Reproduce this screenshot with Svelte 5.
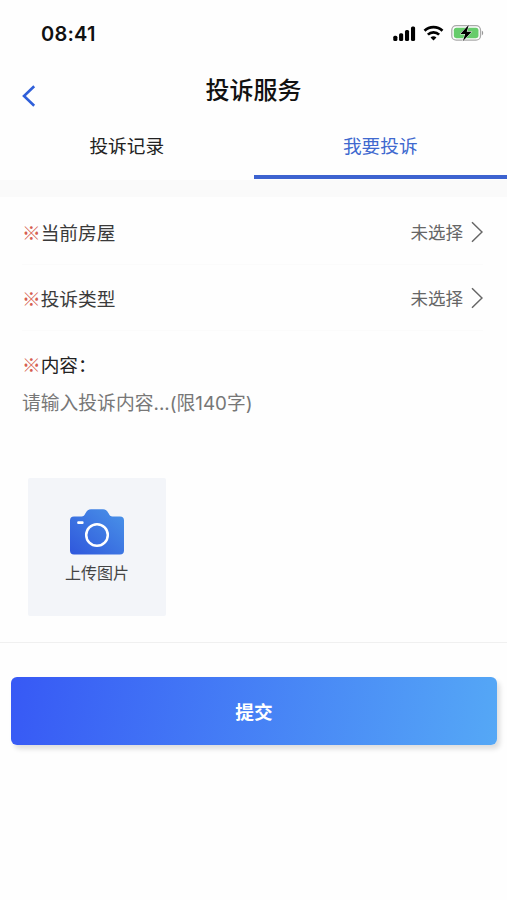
<script>
  const tabs = ['投诉记录', '我要投诉'];
  let activeTab = 1;
  let content = '';

  const fields = [
    { label: '当前房屋', value: '未选择' },
    { label: '投诉类型', value: '未选择' }
  ];
</script>

<div class="page">
  <div class="status-bar">
    <span class="time">08:41</span>
    <div class="status-icons">
      <svg width="23" height="15" viewBox="0 0 24 16">
        <rect x="0" y="10.5" width="4.4" height="5.5" rx="1.6" />
        <rect x="6.2" y="7.8" width="4.4" height="8.2" rx="1.6" />
        <rect x="12.5" y="4.2" width="4.4" height="11.8" rx="1.6" />
        <rect x="18.9" y="0.4" width="4.4" height="15.6" rx="1.6" />
      </svg>
      <svg class="wifi" width="21" height="16" viewBox="0 0 22 16">
        <path d="M1.6 5.7a13.4 13.4 0 0 1 18.8 0" />
        <path d="M5.1 9.7a8.4 8.4 0 0 1 11.8 0" />
        <path class="dot" d="M7.9 12.6Q11 10.2 14.1 12.6L11 15.8z" />
      </svg>
      <svg class="battery" width="33" height="18" viewBox="0 0 34 18">
        <rect x="0.8" y="1.4" width="29.6" height="15" rx="4.6" fill="none" stroke="#aaa" stroke-width="1.3" />
        <rect x="2.9" y="3.5" width="25.4" height="10.8" rx="2.6" fill="#66cc6b" />
        <path d="M31.8 6.6c1.8.6 1.8 4 0 4.6z" fill="#999" />
        <path d="M18.4.6 9.6 10h5l-2.4 7.5 9-9.8h-5z" stroke="#fff" stroke-width="1" paint-order="stroke" />
      </svg>
    </div>
  </div>

  <header>
    <button class="back" aria-label="返回">
      <svg width="14" height="22" viewBox="0 0 14 22">
        <path d="M12.2 1.3 2 11l10.2 9.7" />
      </svg>
    </button>
    <h1>投诉服务</h1>
  </header>

  <nav>
    {#each tabs as tab, i}
      <button class="tab" class:active={activeTab === i} on:click={() => (activeTab = i)}>
        {tab}
      </button>
    {/each}
  </nav>

  <div class="divider"></div>

  <div class="fields">
    {#each fields as field}
      <div class="field">
        <span class="label"><i>※</i>{field.label}</span>
        <span class="value">{field.value}</span>
        <svg width="12" height="22" viewBox="0 0 12 22">
          <path d="M1 1.3 11 11 1 20.7" />
        </svg>
      </div>
    {/each}
  </div>

  <div class="content">
    <label for="content"><i>※</i>内容：</label>
    <textarea id="content" bind:value={content} maxlength="140" placeholder="请输入投诉内容...(限140字)"></textarea>
    <button class="upload">
      <svg width="54" height="46" viewBox="0 0 54 46">
        <defs>
          <linearGradient id="camera" x1="0" y1="1" x2="1" y2="0">
            <stop offset="0" stop-color="#2f57dc" />
            <stop offset="1" stop-color="#4a94e8" />
          </linearGradient>
        </defs>
        <path
          d="M4 7.5h7.5c2 0 3-1 3.8-3L16 3.6c.8-2 2.5-3.4 5-3.4h12c2.5 0 4.2 1.4 5 3.4l.7.9c.8 2 1.8 3 3.8 3H50a4 4 0 0 1 4 4V41.5a4 4 0 0 1-4 4H4a4 4 0 0 1-4-4v-30a4 4 0 0 1 4-4z"
          fill="url(#camera)"
        />
        <circle cx="27" cy="26" r="10.8" fill="none" stroke="#fff" stroke-width="2.5" />
        <rect x="7.2" y="12.2" width="6.4" height="2.8" rx="1.1" fill="#fff" />
      </svg>
      <span>上传图片</span>
    </button>
  </div>

  <div class="footer">
    <button class="submit">提交</button>
  </div>
</div>

<style>
  :global(body) {
    background: #fefefe;
  }

  .page {
    height: 900px;
    overflow: hidden;
    color: #3a3a3a;
    font-family: Inter, 'Noto Sans CJK SC', sans-serif;
  }

  button {
    padding: 0;
    border: none;
    background: none;
    font-family: inherit;
    cursor: pointer;
  }

  .status-bar {
    display: flex;
    justify-content: space-between;
    align-items: center;
    height: 66px;
    box-sizing: border-box;
    padding: 0 23px 0 41px;
  }

  .time {
    padding-top: 1px;
    color: #111;
    font-size: 20px;
    font-weight: 600;
    letter-spacing: 0.25px;
  }

  .status-icons {
    display: flex;
    align-items: center;
    gap: 7px;
  }

  .wifi path {
    fill: none;
    stroke: #000;
    stroke-width: 2.8;
  }

  .wifi .dot {
    fill: #000;
    stroke: none;
  }

  header {
    display: grid;
    grid-template-columns: 60px 1fr 60px;
    align-items: center;
    height: 48px;
  }

  .back {
    display: flex;
    padding: 12px 0 0 22px;
  }

  .back path {
    fill: none;
    stroke: #2f5fd9;
    stroke-width: 2.6;
  }

  h1 {
    margin: 0;
    padding-top: 2px;
    color: #111;
    font-size: 24px;
    font-weight: 500;
    line-height: 46px;
    text-align: center;
  }

  nav {
    display: flex;
    height: 66px;
  }

  .tab {
    flex: 1;
    height: 65px;
    box-sizing: border-box;
    border-bottom: 4px solid transparent;
    color: #222;
    font-size: 18.7px;
  }

  .tab.active {
    border-color: #3d63d0;
    color: #4069cf;
  }

  .divider {
    height: 17px;
    background: #fafafa;
  }

  .fields {
    padding: 2px 24px 0 22px;
  }

  .field {
    display: flex;
    align-items: center;
    height: 66px;
    box-sizing: border-box;
    border-bottom: 1px solid #fbfbfb;
  }

  .label {
    flex: 1;
    padding-top: 4px;
    font-size: 18.7px;
    line-height: 28px;
  }

  i {
    color: #d65f50;
    font-family: 'Noto Sans CJK SC', sans-serif;
    font-style: normal;
    font-weight: 500;
    line-height: 0;
  }

  .value {
    margin-right: 8px;
    color: #666;
    font-size: 17.5px;
  }

  .field path {
    fill: none;
    stroke: #666;
    stroke-width: 1.5;
  }

  .content {
    height: 312px;
    box-sizing: border-box;
    padding: 21px 22px 0;
    border-bottom: 1px solid #f0f0f0;
  }

  .content label {
    display: block;
    color: #222;
    font-size: 18.7px;
    line-height: 28px;
  }

  textarea {
    display: block;
    width: 100%;
    height: 88px;
    margin-top: 10px;
    padding: 0;
    border: none;
    outline: none;
    resize: none;
    background: none;
    color: #333;
    font-family: inherit;
    font-size: 18.8px;
    line-height: 28px;
  }

  textarea::placeholder {
    color: #777;
  }

  .upload {
    display: flex;
    flex-direction: column;
    align-items: center;
    width: 138px;
    height: 138px;
    box-sizing: border-box;
    padding-top: 31px;
    margin-left: 6px;
    border-radius: 2px;
    background: #f3f5f9;
  }

  .upload span {
    margin-top: 6px;
    color: #444;
    font-size: 16px;
    line-height: 24px;
  }

  .footer {
    padding: 34px 10px 0 11px;
  }

  .submit {
    width: 100%;
    height: 68px;
    padding-bottom: 2px;
    border-radius: 6px;
    background: linear-gradient(100deg, #3759f5, #55a8f6);
    box-shadow: 3px 4px 5px rgba(0, 0, 0, 0.13);
    color: #fff;
    font-size: 18.7px;
    font-weight: 700;
  }
</style>
